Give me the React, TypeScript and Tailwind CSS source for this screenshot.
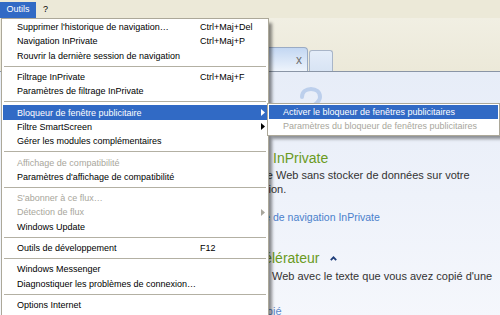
import clsx from "clsx";

type Entry =
  | { label: string; shortcut?: string; arrow?: boolean; disabled?: boolean; active?: boolean }
  | "sep";

const toolsMenu: Entry[] = [
  { label: "Supprimer l'historique de navigation…", shortcut: "Ctrl+Maj+Del" },
  { label: "Navigation InPrivate", shortcut: "Ctrl+Maj+P" },
  { label: "Rouvrir la dernière session de navigation" },
  "sep",
  { label: "Filtrage InPrivate", shortcut: "Ctrl+Maj+F" },
  { label: "Paramètres de filtrage InPrivate" },
  "sep",
  { label: "Bloqueur de fenêtre publicitaire", arrow: true, active: true },
  { label: "Filtre SmartScreen", arrow: true },
  { label: "Gérer les modules complémentaires" },
  "sep",
  { label: "Affichage de compatibilité", disabled: true },
  { label: "Paramètres d'affichage de compatibilité" },
  "sep",
  { label: "S'abonner à ce flux…", disabled: true },
  { label: "Détection de flux", disabled: true, arrow: true },
  { label: "Windows Update" },
  "sep",
  { label: "Outils de développement", shortcut: "F12" },
  "sep",
  { label: "Windows Messenger" },
  { label: "Diagnostiquer les problèmes de connexion…" },
  "sep",
  { label: "Options Internet" },
];

const popupMenu: Entry[] = [
  { label: "Activer le bloqueur de fenêtres publicitaires", active: true },
  { label: "Paramètres du bloqueur de fenêtres publicitaires", disabled: true },
];

function Arrow() {
  return (
    <svg width="4" height="7" viewBox="0 0 4 7" className="shrink-0">
      <path d="M0 0L4 3.5L0 7Z" fill="currentColor" />
    </svg>
  );
}

function MenuRows({ entries, labelWidth }: { entries: Entry[]; labelWidth?: boolean }) {
  return (
    <>
      {entries.map((entry, i) =>
        entry === "sep" ? (
          <div className="flex h-[7px] items-center px-[1px]" key={i}>
            <div className="h-px w-full bg-[#b3b0a3]" />
          </div>
        ) : (
          <div
            className={clsx(
              "flex h-[14.3px] items-center whitespace-nowrap pl-[14px] pr-[2px] leading-[14px]",
              entry.active ? "bg-[#316ac5] text-white" : entry.disabled ? "text-[#a8a69c]" : "text-black",
            )}
            key={i}
          >
            <span className={clsx("shrink-0", labelWidth ? "w-[183px]" : "flex-1")}>{entry.label}</span>
            {labelWidth && <span className="flex-1">{entry.shortcut}</span>}
            {entry.arrow && <Arrow />}
          </div>
        ),
      )}
    </>
  );
}

// a line of page text whose start lies under the open menu
function Cut({
  width,
  gap = 0,
  before,
  children,
  className,
}: {
  width: number;
  gap?: number;
  before: string;
  children: React.ReactNode;
  className?: string;
}) {
  return (
    <div className={clsx("flex whitespace-nowrap", className)}>
      <span className="shrink-0 overflow-hidden text-right" style={{ width, paddingRight: gap }}>
        {before}
      </span>
      {children}
    </div>
  );
}

export default function App() {
  return (
    <div className="relative flex h-[315px] w-[500px] flex-col overflow-hidden bg-[#ece9d8] font-['Liberation_Sans',Arial,sans-serif]">
      {/* menu bar */}
      <div className="flex h-[18px] shrink-0 items-end bg-[#ece9d8] text-[9px]">
        <div className="flex h-[16px] w-[36px] items-center justify-center bg-[#316ac5] text-white">Outils</div>
        <div className="flex h-[16px] items-center px-[7px] text-black">?</div>
      </div>

      {/* tab strip */}
      <div className="flex h-[54px] shrink-0 items-end border-b border-[#8a95a6] bg-gradient-to-b from-[#f1efe3] to-[#ece9d9]">
        <div className="ml-[150px] flex h-[24px] w-[158px] items-center justify-end rounded-tr-[4px] border-r border-t border-[#9aabc4] bg-gradient-to-b from-[#c3d7f2] to-[#eef4fc] pr-[5px]">
          <span className="text-[12px] leading-none text-[#707070]">x</span>
        </div>
        <div className="ml-[1px] h-[21px] w-[24px] rounded-t-[3px] border border-b-0 border-[#a8b5c8] bg-gradient-to-b from-[#e4edf9] to-[#d8e4f4]" />
      </div>

      {/* page content */}
      <div className="flex-1 bg-gradient-to-b from-[#e7edf8] to-[#f5f7fc] text-[11px] leading-[14px] text-[#333]">
        <div className="mt-[14px] flex">
          <div className="w-[298px] shrink-0" />
          <svg width="26" height="30" viewBox="0 0 26 30">
            <path
              d="M4 11C4 6 8 3 13 3C18 3 22 6 22 11C22 16 17 18 14 21L14 26"
              fill="none"
              stroke="#bccfec"
              strokeWidth="4"
              strokeLinecap="round"
            />
          </svg>
        </div>
        <Cut width={273} gap={4} before="Navigation" className="mt-[34px] h-[16px] text-[14px] leading-[16px] text-[#6a9a22]">
          <span>InPrivate</span>
        </Cut>
        <Cut width={276} gap={3} before="Naviguez sur le" className="mt-[2px] h-[14px]">
          <span>Web sans stocker de données sur votre</span>
        </Cut>
        <Cut width={271} before="session de navigati" className="h-[14px]">
          <span>on.</span>
        </Cut>
        <Cut width={273} gap={3} before="Désactiver le mode" className="mt-[14px] h-[14px] text-[10.5px] text-[#4a7fcb]">
          <span>de navigation InPrivate</span>
        </Cut>
        <Cut width={272} before="Accé" className="mt-[26px] h-[16px] text-[14px] leading-[16px] text-[#6a9a22]">
          <span>lérateur</span>
          <svg width="7" height="5" viewBox="0 0 7 5" className="ml-[11px] mt-[6px]">
            <path d="M0.8 4.2L3.5 1.4L6.2 4.2" fill="none" stroke="#1e3d7a" strokeWidth="1.8" />
          </svg>
        </Cut>
        <Cut width={272} gap={3} before="Parcourez le" className="mt-[3px] h-[14px]">
          <span>Web avec le texte que vous avez copié d'une</span>
        </Cut>
        <Cut width={273} before="Texte cop" className="mt-[21px] h-[14px] text-[#5b86c9]">
          <span>ié</span>
        </Cut>
      </div>

      {/* Outils dropdown */}
      <div className="absolute left-[1px] top-[18px] w-[268px] border border-[#aca899] bg-white p-[1px] pb-[4px] text-[9px] shadow-[4px_4px_3px_-1px_rgba(0,0,0,0.45)]">
        <MenuRows entries={toolsMenu} labelWidth />
      </div>

      {/* popup blocker submenu */}
      <div className="absolute left-[267px] top-[103px] w-[233px] border border-[#aca899] bg-white p-[1px] text-[9px] shadow-[4px_4px_3px_-1px_rgba(0,0,0,0.4)]">
        <MenuRows entries={popupMenu} />
      </div>
    </div>
  );
}
